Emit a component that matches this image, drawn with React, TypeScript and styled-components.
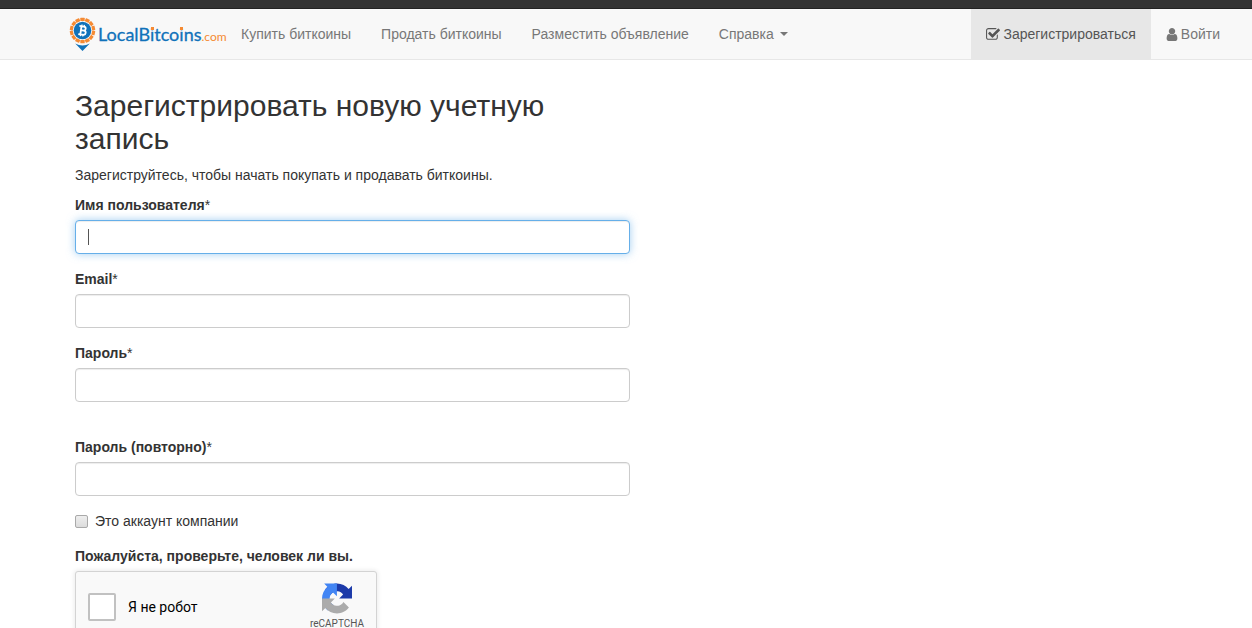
import React from "react";
import styled, { createGlobalStyle } from "styled-components";

const GlobalStyle = createGlobalStyle`
  *, *::before, *::after { box-sizing: border-box; }
  body {
    margin: 0;
    background: #fff;
    color: #333;
    font: 14px/20px "Liberation Sans", Arial, sans-serif;
  }
  svg { flex-shrink: 0; }
`;

const TopStrip = styled.div`
  height: 9px;
  background: #333;
  border-bottom: 1px solid #222;
`;

const Navbar = styled.header`
  background: #f8f8f8;
  border-bottom: 1px solid #e7e7e7;
`;

const NavInner = styled.nav`
  display: flex;
  align-items: center;
  max-width: 1175px;
  margin-left: 60px;
  padding-left: 9px;
`;

const Brand = styled.a`
  display: flex;
  align-items: center;
  gap: 2px;
  width: 157px;
  height: 50px;
  color: #1072ba;
  text-decoration: none;
  white-space: nowrap;
`;

const BrandName = styled.span`
  padding-top: 2px;
  font: 18px/20px Lato, sans-serif;
  -webkit-text-stroke: 0.3px #1072ba;
`;

const OrangeDot = styled.span`
  position: relative;
  &::after {
    content: "";
    position: absolute;
    top: 4px;
    left: 1px;
    width: 3px;
    height: 3px;
    background: #f58a33;
  }
`;

const BrandSuffix = styled.span`
  color: #f58a33;
  font-size: 12px;
  -webkit-text-stroke: 0;
`;

const NavLinks = styled.div<{ $end?: boolean }>`
  display: flex;
  margin-left: ${(p) => (p.$end ? "auto" : "0")};
`;

const NavLink = styled.a<{ $active?: boolean }>`
  display: flex;
  align-items: center;
  gap: 3px;
  padding: 15px;
  color: ${(p) => (p.$active ? "#555" : "#777")};
  background: ${(p) => (p.$active ? "#e7e7e7" : "transparent")};
  text-decoration: none;
  white-space: nowrap;
`;

const Caret = styled.span`
  margin-left: 3px;
  border-top: 4px solid currentColor;
  border-left: 4px solid transparent;
  border-right: 4px solid transparent;
`;

const Main = styled.main`
  max-width: 585px;
  margin-left: 60px;
  padding: 29px 15px 0;
`;

const Title = styled.h1`
  margin: 0 0 10px;
  font-size: 30px;
  line-height: 33px;
  font-weight: 400;
`;

const Lead = styled.p`
  margin: 0 0 10px;
`;

const Field = styled.div<{ $spaced?: boolean }>`
  margin-bottom: ${(p) => (p.$spaced ? "35px" : "15px")};
`;

const Label = styled.label`
  display: block;
  margin-bottom: 5px;
  font-weight: 700;
`;

const Required = styled.span`
  font-weight: 400;
`;

const TextInput = styled.input`
  display: block;
  width: 100%;
  height: 34px;
  padding: 6px 12px;
  border: 1px solid #ccc;
  border-radius: 4px;
  background: #fff;
  color: #555;
  font: inherit;
  box-shadow: inset 0 1px 1px rgba(0, 0, 0, 0.075);

  &:focus {
    border-color: #66afe9;
    outline: 0;
    caret-color: transparent;
    background: linear-gradient(#555, #555) 12px 8px / 1px 16px no-repeat #fff;
    box-shadow: inset 0 1px 1px rgba(0, 0, 0, 0.075), 0 0 8px rgba(102, 175, 233, 0.6);
  }
`;

const CheckRow = styled.label`
  display: flex;
  align-items: center;
  gap: 7px;
  margin-bottom: 15px;
`;

const Checkbox = styled.input`
  appearance: none;
  width: 13px;
  height: 13px;
  margin: 0;
  border: 1px solid #a9a9a9;
  border-radius: 2px;
  background: linear-gradient(#eee, #dcdcdc);
`;

const CaptchaHeading = styled.div`
  margin-bottom: 5px;
  font-weight: 700;
`;

const Captcha = styled.div`
  display: flex;
  align-items: center;
  justify-content: space-between;
  width: 302px;
  height: 76px;
  padding: 0 12px 4px;
  border: 1px solid #d3d3d3;
  border-radius: 3px;
  background: #f9f9f9;
  box-shadow: 0 0 4px 1px rgba(0, 0, 0, 0.08);
  color: #000;
  font-family: Roboto, sans-serif;
`;

const RobotRow = styled.label`
  display: flex;
  align-items: center;
  gap: 12px;
`;

const RobotBox = styled.input`
  appearance: none;
  width: 28px;
  height: 28px;
  margin: 0;
  border: 2px solid #c1c1c1;
  border-radius: 2px;
  background: #fff;
`;

const CaptchaBrand = styled.div`
  display: flex;
  flex-direction: column;
  align-items: center;
  align-self: flex-start;
  gap: 4px;
  padding-top: 11px;
  color: #555;
  font-size: 10px;
  line-height: 12px;
`;

const Page = styled.div`
  height: 100vh;
  overflow: hidden;
`;

const dashes = Array.from({ length: 14 }, (_, i) => (i * 360) / 14);

const PinLogo = () => (
  <svg width="27" height="34" viewBox="0 0 27 34" aria-hidden="true">
    <path d="M6.2 26.6Q13.5 30.4 20.8 26.6L13.5 34z" fill="#1072ba" />
    {dashes.map((a) => (
      <rect key={a} x="11.3" y="0.8" width="4.4" height="3.2" rx="0.5" fill="#f58a33" transform={`rotate(${a} 13.5 13.5)`} />
    ))}
    <circle cx="13.5" cy="13.5" r="8.8" fill="#1072ba" />
    <g transform="rotate(8 13.5 13.5)" fill="none" stroke="#fff" strokeWidth="1.8">
      <path d="M9.8 9.4h4.6a2 2 0 0 1 0 4h-2.5h3a2.1 2.1 0 0 1 0 4.2H9.8M11.9 9.4v8.2" />
      <path d="M12.2 7.6v2M14.6 7.6v2M12.2 17.4v2M14.6 17.4v2" strokeWidth="1.2" />
    </g>
  </svg>
);

const CheckSquareIcon = () => (
  <svg width="14" height="15" viewBox="128 0 1664 1792" fill="currentColor" aria-hidden="true">
    <path d="M1472 930v318q0 119-84.5 203.5t-203.5 84.5h-832q-119 0-203.5-84.5t-84.5-203.5v-832q0-119 84.5-203.5t203.5-84.5h832q63 0 117 25 15 7 18 23 3 17-9 29l-49 49q-10 10-23 10-3 0-9-2-23-6-45-6h-832q-66 0-113 47t-47 113v832q0 66 47 113t113 47h832q66 0 113-47t47-113v-254q0-13 9-22l64-64q10-10 23-10 6 0 12 3 20 8 20 29zm231-489l-814 814q-24 24-57 24t-57-24l-430-430q-24-24-24-57t24-57l110-110q24-24 57-24t57 24l263 263 647-647q24-24 57-24t57 24l110 110q24 24 24 57t-24 57z" transform="translate(64 0)" />
  </svg>
);

const UserIcon = () => (
  <svg width="12" height="15" viewBox="192 0 1408 1792" fill="currentColor" aria-hidden="true">
    <path d="M1536 1399q0 109-62.5 187t-150.5 78h-854q-88 0-150.5-78t-62.5-187q0-85 8.5-160.5t31.5-152 58.5-131 94-89 134.5-34.5q131 128 313 128t313-128q76 0 134.5 34.5t94 89 58.5 131 31.5 152 8.5 160.5zm-256-887q0 159-112.5 271.5t-271.5 112.5-271.5-112.5-112.5-271.5 112.5-271.5 271.5-112.5 271.5 112.5 112.5 271.5z" />
  </svg>
);

const RecaptchaIcon = () => (
  <svg width="30" height="31" viewBox="0 0 64 64" aria-hidden="true">
    <path fill="#1c3aa9" d="M64 31.955l-.033-1.37V4.687l-7.16 7.16C50.948 4.674 42.033.093 32.05.093c-10.4 0-19.622 4.96-25.458 12.64l11.736 11.86a15.55 15.55 0 0 1 4.754-5.334c2.05-1.6 4.952-2.906 8.968-2.906.485 0 .86.057 1.135.163 4.976.393 9.288 3.14 11.828 7.124l-8.307 8.307L64 31.953" />
    <path fill="#4285f4" d="M31.862.094l-1.37.033H4.594l7.16 7.16C4.58 13.147 0 22.06 0 32.046c0 10.4 4.96 19.622 12.64 25.458L24.5 45.768a15.55 15.55 0 0 1-5.334-4.754c-1.6-2.05-2.906-4.952-2.906-8.968 0-.485.057-.86.163-1.135.393-4.976 3.14-9.288 7.124-11.828l8.307 8.307L31.86.095" />
    <path fill="#ababab" d="M.001 32.045l.033 1.37v25.898l7.16-7.16c5.86 7.173 14.774 11.754 24.76 11.754 10.4 0 19.622-4.96 25.458-12.64l-11.736-11.86a15.55 15.55 0 0 1-4.754 5.334c-2.05 1.6-4.952 2.906-8.968 2.906-.485 0-.86-.057-1.135-.163-4.976-.393-9.288-3.14-11.828-7.124l8.307-8.307c-10.522.04-22.4.066-27.295-.005" />
  </svg>
);

const fields = [
  { id: "username", label: "Имя пользователя", type: "text" },
  { id: "email", label: "Email", type: "email" },
  { id: "password", label: "Пароль", type: "password", spaced: true },
  { id: "password2", label: "Пароль (повторно)", type: "password" },
];

export default function App() {
  return (
    <Page>
      <GlobalStyle />
      <TopStrip />
      <Navbar>
        <NavInner>
          <Brand href="#">
            <PinLogo />
            <BrandName>
              LocalB<OrangeDot>i</OrangeDot>tco<OrangeDot>i</OrangeDot>ns<BrandSuffix>.com</BrandSuffix>
            </BrandName>
          </Brand>
          <NavLinks>
            <NavLink href="#">Купить биткоины</NavLink>
            <NavLink href="#">Продать биткоины</NavLink>
            <NavLink href="#">Разместить объявление</NavLink>
            <NavLink href="#">
              Справка
              <Caret />
            </NavLink>
          </NavLinks>
          <NavLinks $end>
            <NavLink href="#" $active>
              <CheckSquareIcon />
              Зарегистрироваться
            </NavLink>
            <NavLink href="#">
              <UserIcon />
              Войти
            </NavLink>
          </NavLinks>
        </NavInner>
      </Navbar>
      <Main>
        <Title>Зарегистрировать новую учетную запись</Title>
        <Lead>Зарегиструйтесь, чтобы начать покупать и продавать биткоины.</Lead>
        <form>
          {fields.map((f, i) => (
            <Field key={f.id} $spaced={f.spaced}>
              <Label htmlFor={f.id}>
                {f.label}
                <Required>*</Required>
              </Label>
              <TextInput id={f.id} type={f.type} autoFocus={i === 0} />
            </Field>
          ))}
          <CheckRow>
            <Checkbox type="checkbox" />
            Это аккаунт компании
          </CheckRow>
          <CaptchaHeading>Пожалуйста, проверьте, человек ли вы.</CaptchaHeading>
          <Captcha>
            <RobotRow>
              <RobotBox type="checkbox" />
              Я не робот
            </RobotRow>
            <CaptchaBrand>
              <RecaptchaIcon />
              reCAPTCHA
            </CaptchaBrand>
          </Captcha>
        </form>
      </Main>
    </Page>
  );
}
